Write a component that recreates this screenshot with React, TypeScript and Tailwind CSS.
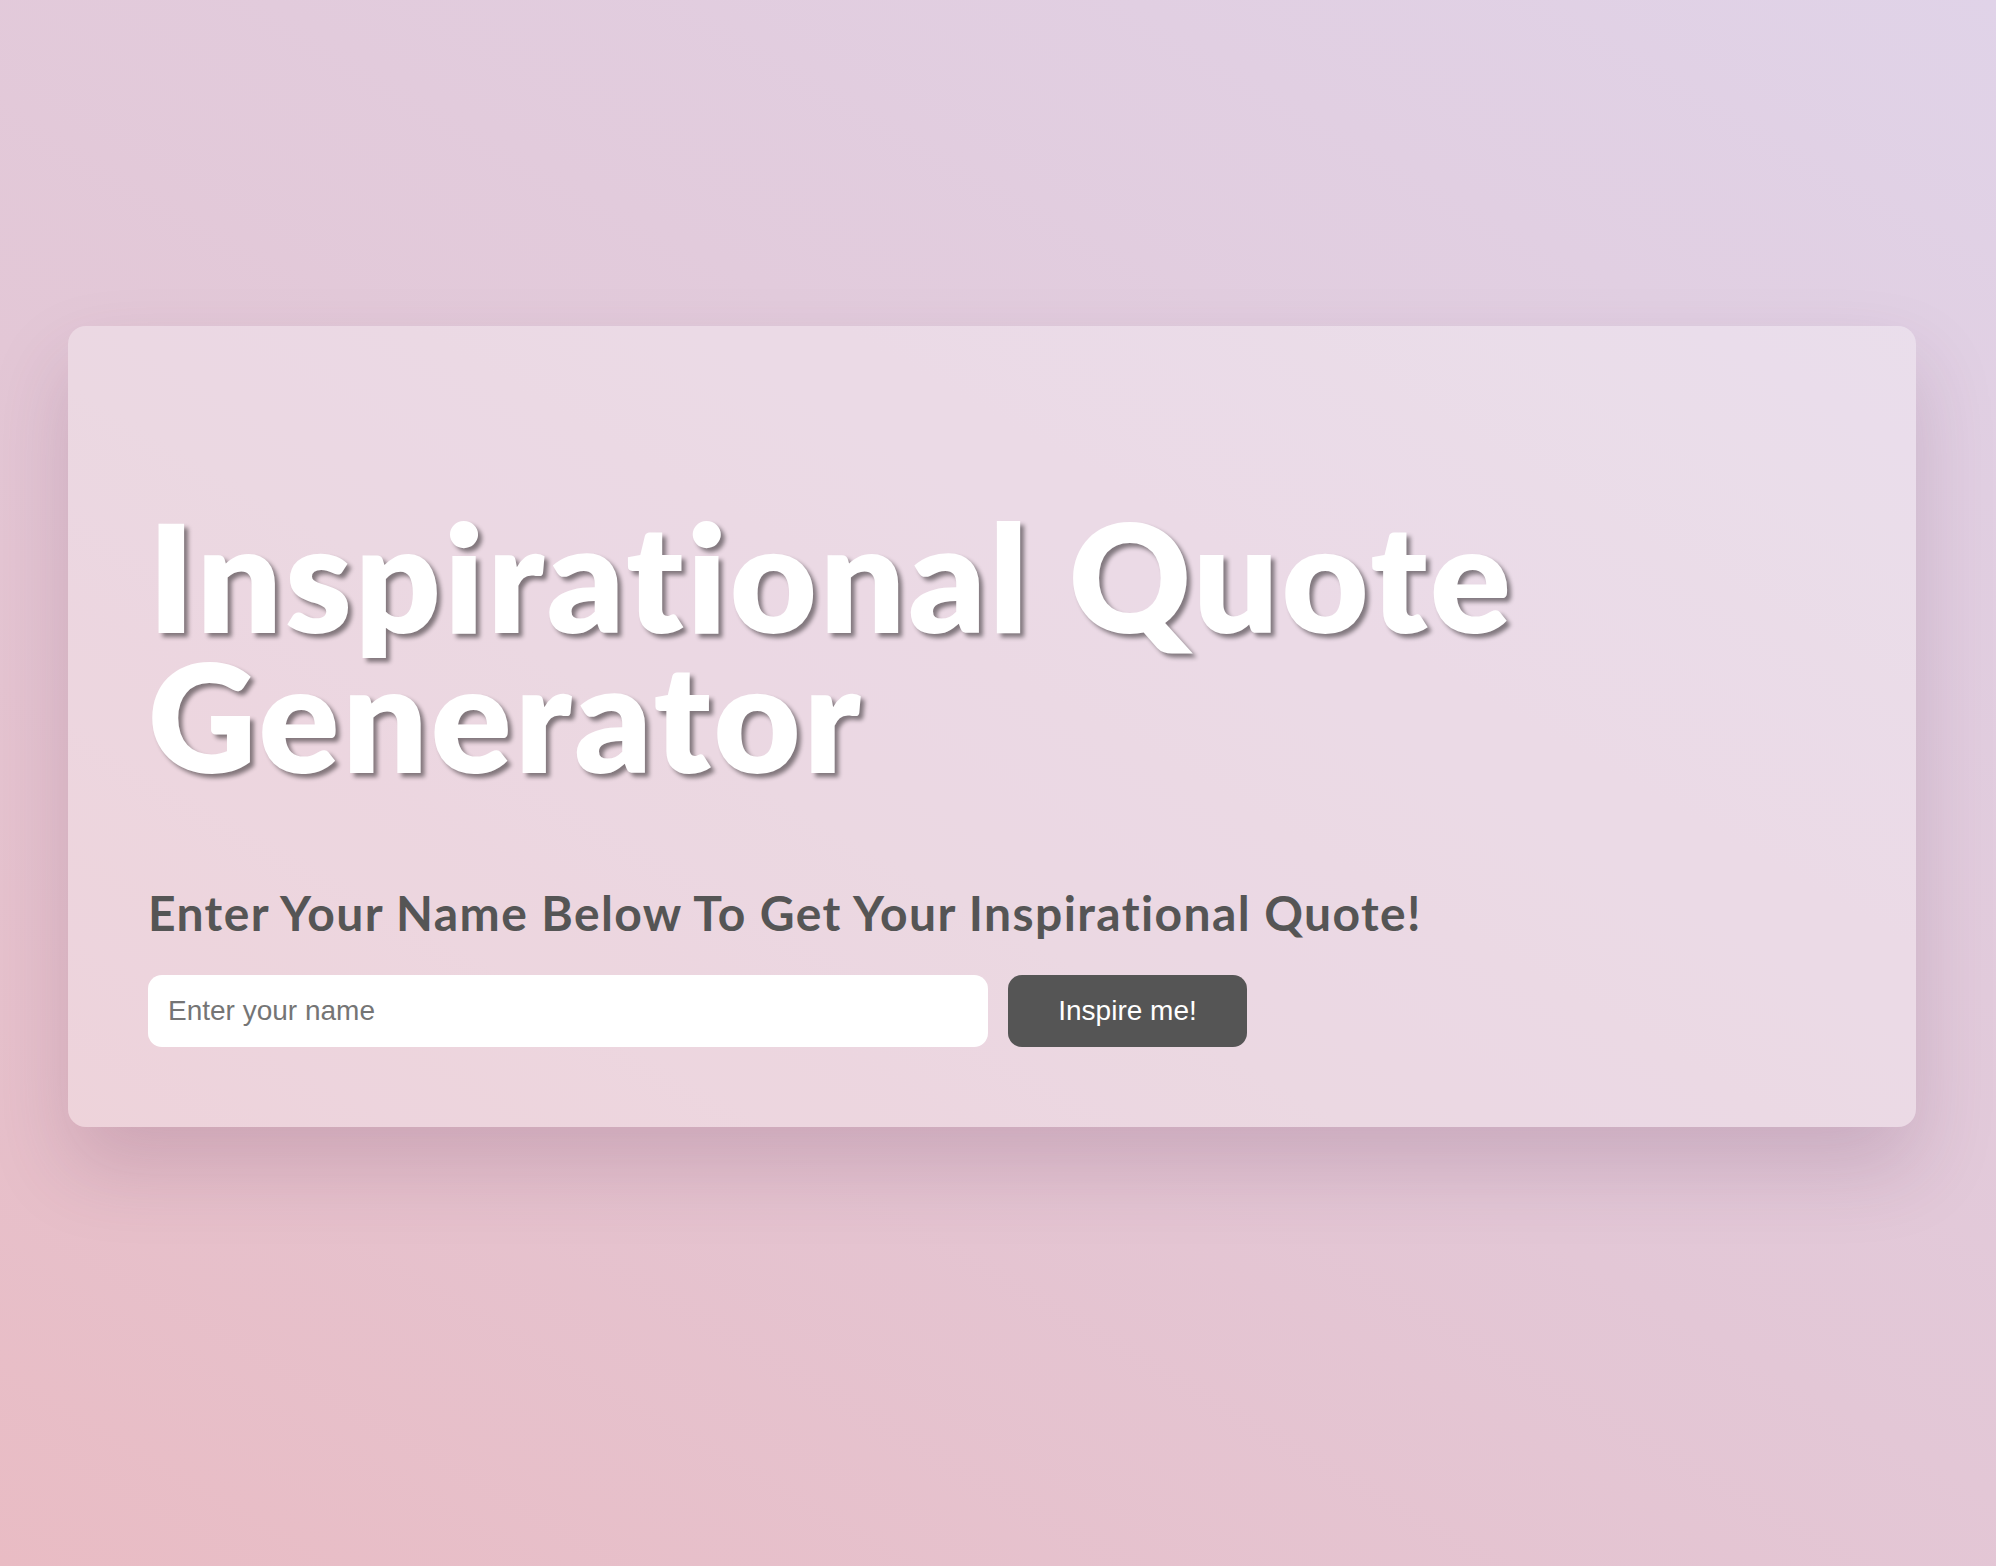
export default function App() {
  return (
    <div className="min-h-screen w-full bg-[linear-gradient(30deg,#e9bcc4_0%,#e3c7d6_45%,#e0d3e8_100%)] font-['Lato',sans-serif]">
      <div className="pt-[326px] pl-[68px] pr-[80px] pb-[439px]">
        {/* Card */}
        <div className="rounded-[18px] bg-white/30 shadow-[0_40px_80px_rgba(90,40,80,0.18)] px-[80px] pt-[179px] pb-[80px] h-[801px] flex flex-col">
          <h1 className="text-white font-['Lato',sans-serif] font-extrabold text-[150px] leading-[140px] tracking-[3px] [text-shadow:4px_4px_4px_rgba(0,0,0,0.45)]">
            Inspirational Quote
            <br />
            Generator
          </h1>

          <h2 className="mt-[100px] text-[#555555] font-bold text-[48px] leading-[56px] tracking-[1.4px]">
            Enter Your Name Below To Get Your Inspirational Quote!
          </h2>

          <div className="mt-[34px] flex items-center gap-[20px]">
            <input
              type="text"
              placeholder="Enter your name"
              className="w-[840px] h-[72px] rounded-[14px] bg-white px-[20px] text-[28px] font-['Liberation_Sans',Arial,sans-serif] text-[#333] placeholder:text-[#757575] outline-none"
            />
            <button className="w-[239px] h-[72px] rounded-[14px] bg-[#555555] text-white text-[28px] font-['Liberation_Sans',Arial,sans-serif]">
              Inspire me!
            </button>
          </div>
        </div>
      </div>
    </div>
  );
}
